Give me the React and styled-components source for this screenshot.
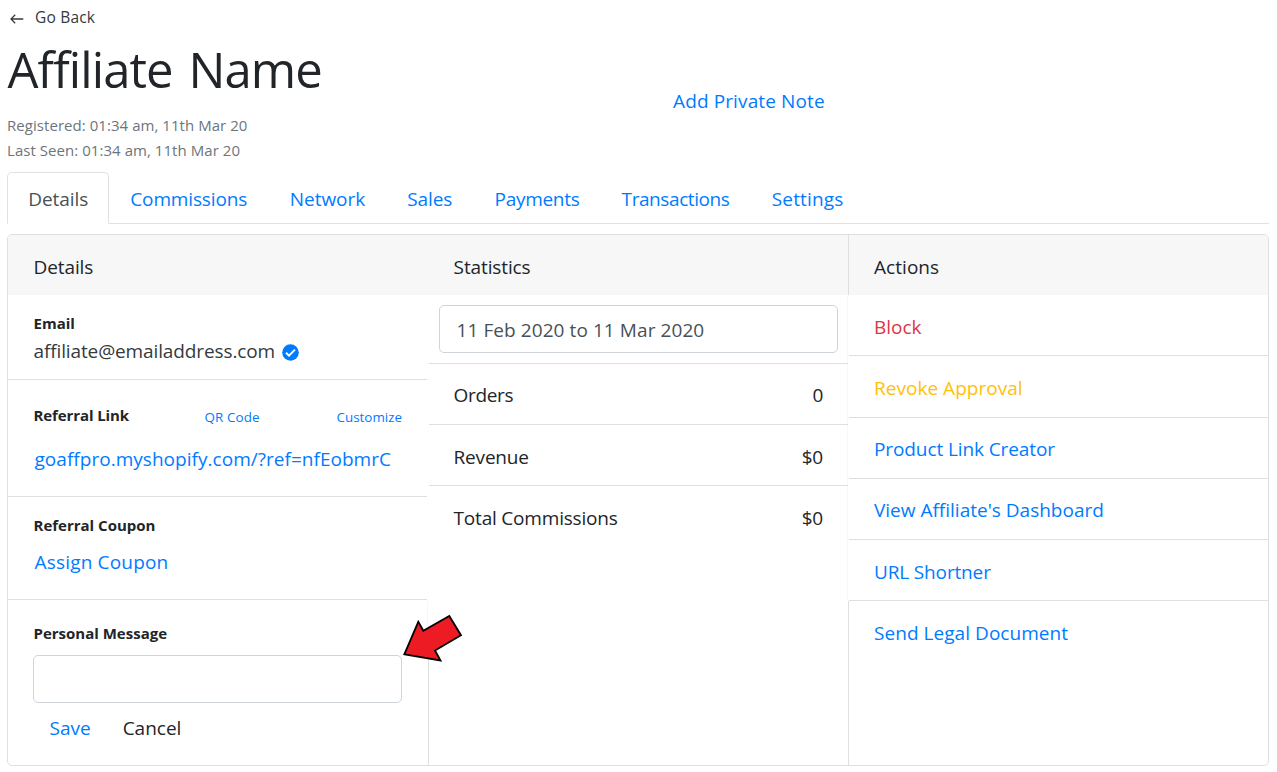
import React from "react";
import styled, { createGlobalStyle } from "styled-components";

const color = {
  text: "#212529",
  soft: "#343a40",
  field: "#495057",
  muted: "#6c757d",
  link: "#007bff",
  danger: "#dc3545",
  warning: "#ffc107",
  line: "#dfdfdf",
  faint: "#f7f7f7",
};

const GlobalStyle = createGlobalStyle`
  * { box-sizing: border-box; }
  body {
    margin: 0;
    background: #fff;
    color: ${color.text};
    font-family: "Open Sans", "Noto Sans", sans-serif;
    font-size: 19px;
    font-variant-ligatures: none;
    overflow: hidden;
  }
`;

const Page = styled.main`
  position: relative;
  width: 1277px;
  height: 772px;
  padding: 0 8px 0 7px;
`;

const Header = styled.header`
  display: flex;
  align-items: flex-start;
  height: 172px;
`;

const Identity = styled.div`
  width: 666px;
`;

const BackLink = styled.a`
  display: flex;
  align-items: center;
  gap: 11px;
  height: 34px;
  padding-left: 3px;
  color: ${color.soft};
  font-size: 15.5px;
  letter-spacing: 0.2px;

  svg { margin-top: 4px; }
`;

const Title = styled.h1`
  margin: 3px 0 0;
  padding-left: 0.5px;
  font-size: 49px;
  font-weight: 400;
  line-height: 64px;
  letter-spacing: -0.9px;
  word-spacing: 4px;
`;

const Meta = styled.div`
  margin-top: 12px;
  color: ${color.muted};
  font-size: 15px;
  line-height: 25px;
  letter-spacing: 0.05px;
`;

const Action = styled.a`
  color: ${(p) => color[p.$tone || "link"]};
  letter-spacing: ${(p) => p.$ls || 0}px;
  white-space: nowrap;
  cursor: pointer;
`;

const NoteAction = styled(Action)`
  margin-top: 86px;
  line-height: 30px;
`;

const Tabs = styled.nav`
  display: flex;
  height: 52px;
  width: 1262px;
  border-bottom: 1px solid #dee2e6;
`;

const Tab = styled.a`
  width: ${(p) => p.$w}px;
  height: 52px;
  padding: 2px 0 0 20.3px;
  border: 1px solid transparent;
  border-radius: 5px 5px 0 0;
  line-height: 49px;
  letter-spacing: ${(p) => p.$ls || 0}px;
  color: ${color.link};
  white-space: nowrap;
  ${(p) =>
    p.$active &&
    `color: ${color.field}; background: #fff; border-color: #dee2e6 #dee2e6 #fff;`}
`;

const CardGroup = styled.section`
  display: grid;
  grid-template-columns: 420px 420px 420px;
  width: 1262px;
  height: 532px;
  margin-top: 10px;
  border: 1px solid ${color.line};
  border-radius: 5px;
  overflow: hidden;
`;

const Card = styled.div`
  display: flex;
  flex-direction: column;
  padding-left: ${(p) => (p.$divider ? 1 : 0)}px;
  background:
    linear-gradient(${color.line}, ${color.line}) no-repeat left bottom / 1px
      ${(p) => p.$divider || 0}px,
    linear-gradient(${color.faint}, ${color.faint}) no-repeat right
      ${(p) => p.$edge?.top || 0}px / 1px ${(p) => p.$edge?.height || 0}px;
  background-position: left bottom, right 0 top ${(p) => p.$edge?.top || 0}px;
`;

const CardHeader = styled.h2`
  flex: none;
  height: 60px;
  margin: 0 0 0 ${(p) => (p.$joined ? -1 : 0)}px;
  padding: 4px 0 0 ${(p) => (p.$ruled ? 25 : 25.6)}px;
  border-left: ${(p) => (p.$ruled ? `1px solid ${color.line}` : "0")};
  background: #f7f7f7;
  font-size: 19px;
  font-weight: 400;
  line-height: 57px;
  letter-spacing: ${(p) => (p.$ruled ? 0.05 : -0.12)}px;
`;

const Block = styled.div`
  flex: none;
  height: ${(p) => p.$h}px;
  margin-right: 1px;
  padding: ${(p) => p.$top}px 25px 0 25.5px;
  border-bottom: ${(p) => (p.$last ? "0" : `1px solid ${color.line}`)};
`;

const Label = styled.div`
  font-size: 15px;
  font-weight: 700;
  line-height: 24px;
`;

const LinkHead = styled.div`
  display: grid;
  grid-template-columns: 171px 1fr auto;

  ${Label} { letter-spacing: -0.1px; }
`;

const SmallAction = styled(Action)`
  margin-top: 2px;
  font-size: 13.4px;
  line-height: 24px;
`;

const Value = styled.div`
  display: flex;
  align-items: center;
  height: 30px;
  margin-top: ${(p) => p.$gap || 0}px;
  padding-left: ${(p) => p.$indent || 0}px;
  color: ${color.soft};
  letter-spacing: ${(p) => p.$ls || 0}px;

  svg { margin: 3px 0 0 7px; }
`;

const Input = styled.input`
  display: block;
  width: 100%;
  height: 48px;
  padding: 2px 16px 0 16.5px;
  border: 1px solid #ced4da;
  border-radius: 5px;
  outline: none;
  background: #fff;
  color: ${color.field};
  font: inherit;
  letter-spacing: 0.08px;
`;

const MessageField = styled.div`
  width: 369px;
  margin: 10px 0 0 -0.5px;
`;

const Buttons = styled.div`
  display: flex;
  gap: 32px;
  margin-top: 10px;
  padding-left: 16px;
  line-height: 30px;
`;

const Range = styled.div`
  flex: none;
  height: 69px;
  padding: 10px 10px 0;
  border-bottom: 1px solid ${color.line};
`;

const Row = styled.div`
  display: flex;
  flex: none;
  justify-content: space-between;
  align-items: center;
  height: ${(p) => p.$h || 61}px;
  padding: ${(p) => p.$top ?? 3}px 25px 0 ${(p) => p.$left || 25}px;
  border-bottom: 1px solid ${(p) => (p.$last ? "transparent" : color.line)};
  letter-spacing: ${(p) => p.$ls || 0}px;
`;

const Pointer = styled.svg`
  position: absolute;
  left: 400px;
  top: 610px;
`;

const tabs = [
  { name: "Details", w: 102, active: true, ls: -0.08 },
  { name: "Commissions", w: 159.5, ls: -0.15 },
  { name: "Network", w: 117.5, ls: -0.05 },
  { name: "Sales", w: 87.3, ls: -0.1 },
  { name: "Payments", w: 127, ls: -0.3 },
  { name: "Transactions", w: 150.2, ls: -0.42 },
  { name: "Settings", w: 114, ls: 0.15 },
];

const stats = [
  { name: "Orders", value: "0", top: 2, ls: -0.35 },
  { name: "Revenue", value: "$0", ls: -0.2 },
  { name: "Total Commissions", value: "$0", ls: -0.2, last: true },
];

const actions = [
  { name: "Block", tone: "danger", ls: 0 },
  { name: "Revoke Approval", tone: "warning", ls: 0.03, h: 62 },
  { name: "Product Link Creator", ls: -0.1, top: 1 },
  { name: "View Affiliate's Dashboard", top: 1 },
  { name: "URL Shortner", ls: -0.15 },
  { name: "Send Legal Document", ls: 0.05, last: true },
];

const BackIcon = () => (
  <svg width="14" height="10" viewBox="0 0 14 10" fill="none" stroke={color.soft} strokeWidth="1.3">
    <path d="M1 5H13.3M5.2 0.8L1 5L5.2 9.2" />
  </svg>
);

const VerifiedIcon = () => (
  <svg width="17" height="17" viewBox="0 0 17 17" fill="none">
    <circle cx="8.5" cy="8.5" r="8.3" fill={color.link} />
    <path d="M4 8.8L7 11.7L13 5.6" stroke="#fff" strokeWidth="2" />
  </svg>
);

export default function App() {
  return (
    <>
      <GlobalStyle />
      <Page>
        <Header>
          <Identity>
            <BackLink>
              <BackIcon />
              Go Back
            </BackLink>
            <Title>Affiliate Name</Title>
            <Meta>
              <div>Registered: 01:34 am, 11th Mar 20</div>
              <div>Last Seen: 01:34 am, 11th Mar 20</div>
            </Meta>
          </Identity>
          <NoteAction $ls={0.12}>Add Private Note</NoteAction>
        </Header>

        <Tabs>
          {tabs.map((t) => (
            <Tab key={t.name} $w={t.w} $ls={t.ls} $active={t.active}>
              {t.name}
            </Tab>
          ))}
        </Tabs>

        <CardGroup>
          <Card $edge={{ top: 366, height: 50 }}>
            <CardHeader>Details</CardHeader>
            <Block $h={85} $top={16}>
              <Label>Email</Label>
              <Value $gap={1} $ls={-0.12}>
                affiliate@emailaddress.com
                <VerifiedIcon />
              </Value>
            </Block>
            <Block $h={117} $top={23}>
              <LinkHead>
                <Label>Referral Link</Label>
                <SmallAction $ls={0.1}>QR Code</SmallAction>
                <SmallAction>Customize</SmallAction>
              </LinkHead>
              <Value $gap={15} $indent={1}>
                <Action $ls={0.03}>goaffpro.myshopify.com/?ref=nfEobmrC</Action>
              </Value>
            </Block>
            <Block $h={103} $top={16}>
              <Label>Referral Coupon</Label>
              <Value $gap={10} $indent={1}>
                <Action $ls={0.18}>Assign Coupon</Action>
              </Value>
            </Block>
            <Block $h={165} $top={21} $last>
              <Label>Personal Message</Label>
              <MessageField>
                <Input aria-label="Personal Message" />
              </MessageField>
              <Buttons>
                <Action>Save</Action>
                <Action $tone="text">Cancel</Action>
              </Buttons>
            </Block>
          </Card>

          <Card $divider={110} $edge={{ top: 60, height: 306 }}>
            <CardHeader $joined>Statistics</CardHeader>
            <Range>
              <Input defaultValue="11 Feb 2020 to 11 Mar 2020" aria-label="Date range" />
            </Range>
            {stats.map((s) => (
              <Row key={s.name} $top={s.top} $left={24.6} $ls={s.ls} $last={s.last}>
                <span>{s.name}</span>
                <span>{s.value}</span>
              </Row>
            ))}
          </Card>

          <Card $divider={164}>
            <CardHeader $joined $ruled>Actions</CardHeader>
            {actions.map((a) => (
              <Row key={a.name} $h={a.h} $top={a.top} $last={a.last}>
                <Action $tone={a.tone} $ls={a.ls}>{a.name}</Action>
              </Row>
            ))}
          </Card>
        </CardGroup>

        <Pointer width="66" height="56" viewBox="0 0 66 56">
          <path
            d="M4.3 44.3L18.3 11.8L23.3 20.7L49.3 6L61 25.3L35 40.5L40.5 50.5Z"
            fill="#ed1c24"
            stroke="#000"
            strokeWidth="1.8"
          />
        </Pointer>
      </Page>
    </>
  );
}
